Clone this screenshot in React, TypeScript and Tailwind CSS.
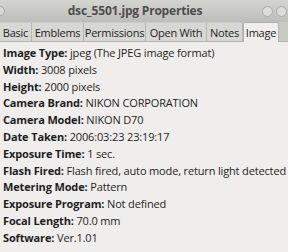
const rows: [string, string][] = [
  ['Image Type:', 'jpeg (The JPEG image format)'],
  ['Width:', '3008 pixels'],
  ['Height:', '2000 pixels'],
  ['Camera Brand:', 'NIKON CORPORATION'],
  ['Camera Model:', 'NIKON D70'],
  ['Date Taken:', '2006:03:23 23:19:17'],
  ['Exposure Time:', '1 sec.'],
  ['Flash Fired:', 'Flash fired, auto mode, return light detected'],
  ['Metering Mode:', 'Pattern'],
  ['Exposure Program:', 'Not defined'],
  ['Focal Length:', '70.0 mm'],
  ['Software:', 'Ver.1.01'],
];

const tabs: { label: string; w: string }[] = [
  { label: 'Basic', w: 'w-[32px]' },
  { label: 'Emblems', w: 'w-[52px]' },
  { label: 'Permissions', w: 'w-[62px]' },
  { label: 'Open With', w: 'w-[61px]' },
  { label: 'Notes', w: 'w-[36px]' },
];

export default function App() {
  return (
    <div
      className="w-[288px] h-[252px] overflow-hidden bg-[#efeeec] text-[#1e1e1e] flex flex-col"
      style={{ fontFamily: '"Open Sans", "Noto Sans", sans-serif' }}
    >
      {/* title bar */}
      <div className="h-[22px] shrink-0 bg-gradient-to-b from-[#d4d4d1] to-[#bdbdb9] flex items-center justify-between relative">
        <span className="w-[10px] h-[10px] rounded-full bg-[#d8d8d6] border border-[#a9a9a6] -ml-[5px]" />
        <span className="absolute left-0 right-0 text-center text-[12px] font-bold text-[#4e4e4c] tracking-[-0.2px] leading-[22px] -translate-x-[9px]">
          dsc_5501.jpg Properties
        </span>
        <div className="flex gap-[3px] mr-[1px]">
          <span className="w-[11px] h-[11px] rounded-full bg-[#dcdcda] border border-[#aaaaa7]" />
          <span className="w-[11px] h-[11px] rounded-full bg-[#dcdcda] border border-[#aaaaa7]" />
        </div>
      </div>

      {/* tabs */}
      <div className="h-[20px] shrink-0 bg-[#c9c9c6] flex items-end border-b border-[#b3b3af]">
        {tabs.map((t) => (
          <div
            key={t.label}
            className={`${t.w} h-[18px] flex items-center justify-center border-r border-[#b5b5b1] bg-[#d7d7d4] text-[11px] leading-none tracking-[-0.25px]`}
          >
            {t.label}
          </div>
        ))}
        <div className="w-[36px] h-[20px] -mb-px flex items-center justify-center bg-[#efeeec] border border-b-0 border-[#b0b0ac] rounded-t-[2px] text-[11px] leading-none tracking-[-0.25px]">
          Image
        </div>
      </div>

      {/* content */}
      <div className="flex flex-col pl-[3px] pt-[3px] text-[11px] leading-[16.8px] tracking-[-0.15px] whitespace-nowrap">
        {rows.map(([k, v]) => (
          <div key={k}>
            <span className="font-bold">{k}</span> {v}
          </div>
        ))}
      </div>
    </div>
  );
}
